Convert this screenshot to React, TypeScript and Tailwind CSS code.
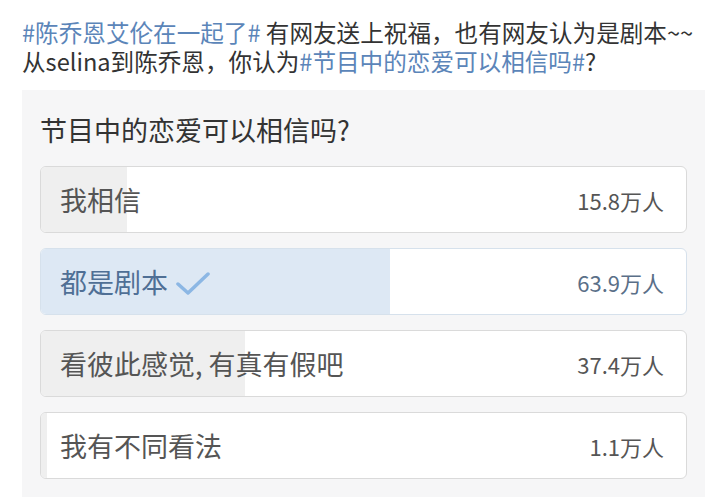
const options = [
  { label: "我相信", count: 15.8 },
  { label: "都是剧本", count: 63.9, chosen: true },
  { label: "看彼此感觉, 有真有假吧", count: 37.4 },
  { label: "我有不同看法", count: 1.1 },
];

const total = options.reduce((sum, o) => sum + o.count, 0);

function Check() {
  return (
    <svg width="34" height="26" viewBox="0 0 34 26" className="ml-2 mt-1">
      <path
        d="M2 13 L12 22 L32 3"
        fill="none"
        stroke="#8cb7e4"
        strokeWidth="3.5"
        strokeLinecap="round"
        strokeLinejoin="round"
      />
    </svg>
  );
}

export default function App() {
  return (
    <div
      className="w-[728px] h-[497px] overflow-hidden bg-white"
      style={{ fontFamily: '"Noto Sans CJK SC", "Noto Sans", sans-serif' }}
    >
      <div className="px-[22px] pt-[18px] text-[23.6px] leading-[29px] text-[#333]">
        <p className="flex whitespace-pre">
          <span className="text-[#5b85b9]">#陈乔恩艾伦在一起了#</span>
          <span> 有网友送上祝福，也有网友认为是剧本~~</span>
        </p>
        <p className="flex whitespace-pre">
          <span>从selina到陈乔恩，你认为</span>
          <span className="text-[#5b85b9]">#节目中的恋爱可以相信吗#</span>
          <span>?</span>
        </p>
      </div>

      <div className="mt-[14px] ml-[22px] w-[683px] bg-[#f6f6f7] px-[18px] pt-[22px] pb-5">
        <h2 className="text-[27px] leading-[36px] text-[#333]">节目中的恋爱可以相信吗?</h2>

        <div className="mt-[18px] flex flex-col gap-[15px]">
          {options.map((o) => (
            <div
              key={o.label}
              className={`relative h-[67px] overflow-hidden rounded-[6px] border bg-white ${
                o.chosen ? "border-[#d6e1ec]" : "border-[#dadada]"
              }`}
            >
              <div
                className={`absolute inset-y-0 left-0 ${o.chosen ? "bg-[#dde8f4]" : "bg-[#efefef]"}`}
                style={{ width: `${(o.count / total) * 100}%` }}
              />
              <div className="relative flex h-full items-center justify-between pl-[19px] pr-[22px]">
                <div className="flex items-center">
                  <span
                    className={`text-[27px] leading-none ${o.chosen ? "text-[#4f6f95]" : "text-[#555]"}`}
                  >
                    {o.label}
                  </span>
                  {o.chosen && <Check />}
                </div>
                <span className={`text-[22px] leading-none ${o.chosen ? "text-[#5a6f88]" : "text-[#555]"}`}>
                  {o.count}万人
                </span>
              </div>
            </div>
          ))}
        </div>
      </div>
    </div>
  );
}
